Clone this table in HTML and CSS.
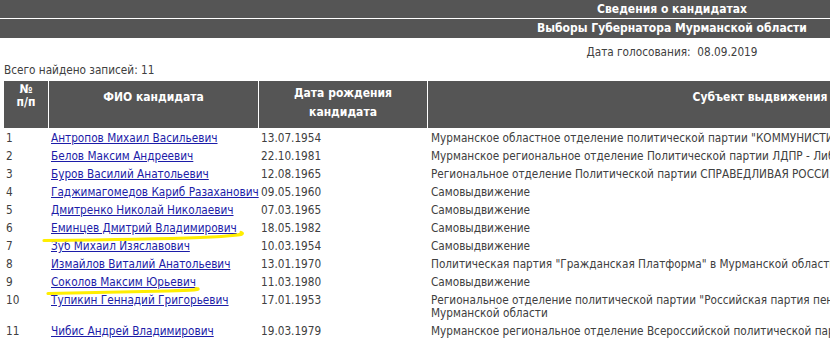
FILE: index.html
```html
<!DOCTYPE html>
<html lang="ru">
<head>
<meta charset="utf-8">
<title>Сведения о кандидатах</title>
<link rel="stylesheet" href="styles.css">
</head>
<body>
<div class="page">
  <div class="titlebar first">Сведения о кандидатах</div>
  <div class="titlebar second">Выборы Губернатора Мурманской области</div>
  <div class="vote-date">Дата голосования:&nbsp; 08.09.2019</div>
  <div class="found">Всего найдено записей: 11</div>
  <table class="cands">
    <thead>
      <tr>
        <th class="c-num"><div class="h-num">№<br>п/п</div></th>
        <th class="c-name"><div class="h-one">ФИО кандидата</div></th>
        <th class="c-date"><div class="h-date">Дата рождения<br>кандидата</div></th>
        <th class="c-subj"><div class="h-one">Субъект выдвижения</div></th>
      </tr>
    </thead>
    <tbody>
      <tr><td>1</td><td><a href="#">Антропов Михаил Васильевич</a></td><td>13.07.1954</td><td class="subj">Мурманское областное отделение политической партии "КОММУНИСТИЧЕСКАЯ ПАРТИЯ РОССИЙСКОЙ ФЕДЕРАЦИИ"</td></tr>
      <tr><td>2</td><td><a href="#">Белов Максим Андреевич</a></td><td>22.10.1981</td><td class="subj">Мурманское региональное отделение Политической партии ЛДПР - Либерально-демократической партии России</td></tr>
      <tr><td>3</td><td><a href="#">Буров Василий Анатольевич</a></td><td>12.08.1965</td><td class="subj">Региональное отделение Политической партии СПРАВЕДЛИВАЯ РОССИЯ в Мурманской области</td></tr>
      <tr><td>4</td><td><a href="#">Гаджимагомедов Кариб Разаханович</a></td><td>09.05.1960</td><td class="subj">Самовыдвижение</td></tr>
      <tr><td>5</td><td><a href="#">Дмитренко Николай Николаевич</a></td><td>07.03.1965</td><td class="subj">Самовыдвижение</td></tr>
      <tr><td>6</td><td><a href="#">Еминцев Дмитрий Владимирович</a></td><td>18.05.1982</td><td class="subj">Самовыдвижение</td></tr>
      <tr><td>7</td><td><a href="#">Зуб Михаил Изяславович</a></td><td>10.03.1954</td><td class="subj">Самовыдвижение</td></tr>
      <tr><td>8</td><td><a href="#">Измайлов Виталий Анатольевич</a></td><td>13.01.1970</td><td class="subj">Политическая партия "Гражданская Платформа" в Мурманской области</td></tr>
      <tr><td>9</td><td><a href="#">Соколов Максим Юрьевич</a></td><td>11.03.1980</td><td class="subj">Самовыдвижение</td></tr>
      <tr><td>10</td><td><a href="#">Тупикин Геннадий Григорьевич</a></td><td>17.01.1953</td><td class="subj">Региональное отделение политической партии "Российская партия пенсионеров за социальную справедливость" в<br>Мурманской области</td></tr>
      <tr><td>11</td><td><a href="#">Чибис Андрей Владимирович</a></td><td>19.03.1979</td><td class="subj">Мурманское региональное отделение Всероссийской политической партии "ЕДИНАЯ РОССИЯ"</td></tr>
    </tbody>
  </table>
  <svg class="marks" width="830" height="345" viewBox="0 0 830 345" aria-hidden="true">
    <path d="M44,240.5 Q150,239.5 200,237.5 T241,232.5" />
    <path d="M48,293.5 Q130,292 168,291 T196,288.5" />
  </svg>
</div>
</body>
</html>
```

FILE: styles.css
```css
html, body {
  margin: 0;
  padding: 0;
  overflow: hidden;
  background: #ffffff;
}

body {
  font-family: "DejaVu Sans Condensed", "DejaVu Sans", sans-serif;
  font-stretch: condensed;
  font-size: 11.7px;
  color: #404040;
}

.page {
  position: relative;
  width: 1344px;
}

.titlebar {
  background: #555555;
  color: #ffffff;
  font-weight: bold;
  font-size: 12px;
  text-align: center;
}

.titlebar.first {
  height: 18px;
  line-height: 18px;
}

.titlebar.second {
  margin-top: 1px;
  height: 19px;
  line-height: 19px;
}

.vote-date {
  text-align: center;
  line-height: 14px;
  padding-top: 7px;
}

.found {
  padding-left: 4px;
  line-height: 14px;
  margin-top: 4px;
}

.cands {
  border-collapse: separate;
  border-spacing: 1px;
  margin-left: 3px;
  margin-top: 3px;
  table-layout: fixed;
  width: 1090px;
}

.cands th {
  background: #555555;
  color: #ffffff;
  font-weight: bold;
  font-size: 12px;
  text-align: center;
  vertical-align: top;
  height: 47px;
  padding: 0;
  box-sizing: border-box;
}

.c-num { width: 44px; }
.c-name { width: 209px; }
.c-date { width: 168px; }
.c-subj { width: 664px; }

.h-num {
  padding-top: 2px;
  line-height: 13px;
}

.h-one {
  padding-top: 9px;
  line-height: 14px;
}

.h-date {
  padding-top: 3px;
  line-height: 19px;
}

.cands td {
  vertical-align: top;
  padding: 3px 2px 1px;
  line-height: 13px;
  white-space: nowrap;
}

.cands td.subj {
  padding-left: 3px;
}

.cands a {
  color: #1c1ca8;
  text-decoration: underline;
}

.marks {
  position: absolute;
  left: 0;
  top: 0;
  pointer-events: none;
}

.marks path {
  fill: none;
  stroke: #ffee00;
  stroke-width: 3.2;
  stroke-linecap: round;
}
```
